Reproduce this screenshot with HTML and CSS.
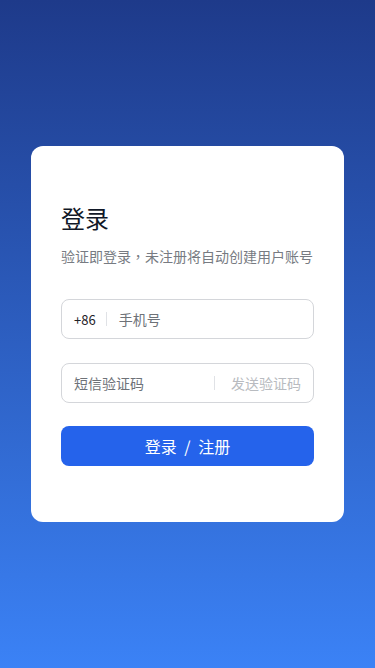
FILE: index.html
```html
<!DOCTYPE html>
<html lang="zh-CN">
<head>
<meta charset="utf-8">
<link rel="stylesheet" href="styles.css">
</head>
<body>
<div class="page">
  <div class="card">
    <h1 class="title">登录</h1>
    <p class="subtitle">验证即登录<span class="comma" lang="zh-TW">，</span>未注册将自动创建用户账号</p>
    <div class="field">
      <span class="prefix">+86</span>
      <span class="sep"></span>
      <span class="ph">手机号</span>
    </div>
    <div class="field field-code">
      <span class="ph grow">短信验证码</span>
      <span class="sep"></span>
      <span class="send">发送验证码</span>
    </div>
    <button class="btn">登录 / 注册</button>
  </div>
</div>
</body>
</html>
```
FILE: styles.css
```css
* { box-sizing: border-box; }
html, body { margin: 0; padding: 0; }
body {
  font-family: "Noto Sans CJK SC", sans-serif;
}
.page {
  width: 375px;
  height: 668px;
  background: linear-gradient(180deg, #1e3a8a 0%, #3b82f6 100%);
  display: flex;
  align-items: center;
  justify-content: center;
}
.card {
  width: 313px;
  background: #fff;
  border-radius: 12px;
  padding: 56px 30px 56px 30px;
  display: flex;
  flex-direction: column;
}
.title {
  margin: 0;
  font-size: 24px;
  line-height: 32px;
  font-weight: 400;
  color: #111827;
}
.subtitle {
  margin: 12px 0 0 0;
  font-size: 14px;
  line-height: 20px;
  color: #777b82;
  white-space: nowrap;
}
.comma {
  font-family: "Noto Sans CJK TC", sans-serif;
}
.field {
  margin-top: 33px;
  height: 40px;
  border: 1px solid #d4d6da;
  border-radius: 8px;
  display: flex;
  align-items: center;
  padding: 0 12px;
}
.field-code { margin-top: 24px; }
.prefix {
  font-size: 13px;
  color: #1f2328;
}
.sep {
  width: 1px;
  height: 14px;
  background: #e0e2e6;
  margin: 0 12px 0 10px;
}
.ph {
  font-size: 14px;
  color: #6e7278;
}
.grow { flex: 1; }
.field-code .sep { margin: 0 16px 0 0; }
.send {
  font-size: 14px;
  color: #b8bbc0;
}
.btn {
  margin-top: 23px;
  height: 40px;
  border: none;
  border-radius: 8px;
  background: #2563eb;
  color: #fff;
  font-family: "Noto Sans CJK SC", sans-serif;
  font-size: 16px;
  word-spacing: 4px;
  padding: 0;
}
```
